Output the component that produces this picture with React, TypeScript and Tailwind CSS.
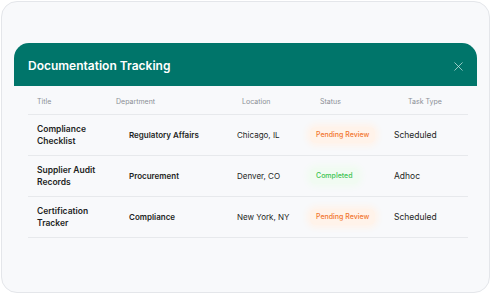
import { X } from 'lucide-react';

type Row = {
  title: string[];
  department: string;
  location: string;
  status: 'Pending Review' | 'Completed';
  taskType: string;
};

const rows: Row[] = [
  {
    title: ['Compliance', 'Checklist'],
    department: 'Regulatory Affairs',
    location: 'Chicago, IL',
    status: 'Pending Review',
    taskType: 'Scheduled',
  },
  {
    title: ['Supplier Audit', 'Records'],
    department: 'Procurement',
    location: 'Denver, CO',
    status: 'Completed',
    taskType: 'Adhoc',
  },
  {
    title: ['Certification', 'Tracker'],
    department: 'Compliance',
    location: 'New York, NY',
    status: 'Pending Review',
    taskType: 'Scheduled',
  },
];

function StatusPill({ status }: { status: Row['status'] }) {
  if (status === 'Completed') {
    return (
      <span className="inline-block rounded-md bg-[#f1fbf2] px-[6px] py-[3px] text-[7px] font-medium text-[#3cc451] shadow-[0_0_6px_3px_#f1fbf2]">
        Completed
      </span>
    );
  }
  return (
    <span className="inline-block rounded-md bg-[#fff3ea] px-[6px] py-[3px] text-[7px] font-medium text-[#f2762e] shadow-[0_0_6px_3px_#fff3ea]">
      Pending Review
    </span>
  );
}

export default function App() {
  return (
    <div className="h-[295px] w-[491px] bg-white p-px font-['Inter',sans-serif]">
      <div className="h-[292px] rounded-[16px] border border-[#e4e6ea] bg-[#f8f9fb] px-[12px] pt-[41px]">
        {/* Header */}
        <div className="flex h-[43px] items-center justify-between rounded-t-[15px] bg-[#00756a] pl-[14px] pr-[11px] pt-[3px]">
          <h1 className="text-[12px] font-semibold text-white">Documentation Tracking</h1>
          <X size={15} strokeWidth={1.2} className="text-[#c6e5e1]" />
        </div>

        {/* Table */}
        <div className="ml-[14px] mr-[9px]">
          <div className="grid h-[29px] grid-cols-[79px_126px_78px_88px_1fr] items-center border-b border-[#e7e9ec] pl-[9px] pt-[5px] text-[7px] text-[#8b8f96]">
            <span>Title</span>
            <span>Department</span>
            <span>Location</span>
            <span>Status</span>
            <span>Task Type</span>
          </div>

          {rows.map((r) => (
            <div
              key={r.department}
              className="grid h-[41px] grid-cols-[92px_108px_73px_84px_1fr] items-center border-b border-[#e7e9ec] pl-[9px] text-[8px] text-[#1d1f23]"
            >
              <div className="text-[8.5px] font-semibold leading-[12px]">
                {r.title.map((t) => (
                  <div key={t}>{t}</div>
                ))}
              </div>
              <span className="font-semibold">{r.department}</span>
              <span>{r.location}</span>
              <span>
                <StatusPill status={r.status} />
              </span>
              <span className="text-[8.5px]">{r.taskType}</span>
            </div>
          ))}
        </div>
      </div>
    </div>
  );
}
